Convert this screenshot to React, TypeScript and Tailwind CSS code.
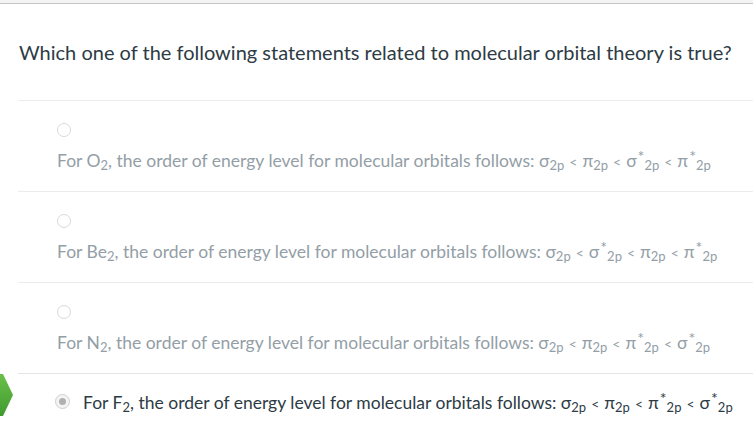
import React from "react";

type Opt = { mol: string; order: [string, string, string, string] };

const options: Opt[] = [
  { mol: "O", order: ["σ", "π", "σ*", "π*"] },
  { mol: "Be", order: ["σ", "σ*", "π", "π*"] },
  { mol: "N", order: ["σ", "π", "π*", "σ*"] },
  { mol: "F", order: ["σ", "π", "π*", "σ*"] },
];

function Orbital({ sym }: { sym: string }) {
  const star = sym.endsWith("*");
  const base = star ? sym.slice(0, -1) : sym;
  return (
    <span>
      {base}
      {star && <sup className="text-[16px] top-[-0.3em] ml-[1px]">*</sup>}
      <sub className="text-[13px]">2p</sub>
    </span>
  );
}

function Statement({ o }: { o: Opt }) {
  return (
    <span>
      For {o.mol}
      <sub className="text-[13px]">2</sub>, the order of energy level for molecular orbitals follows:{" "}
      {o.order.map((s, i) => (
        <React.Fragment key={i}>
          {i > 0 && <span className="text-[14px] px-[5px]">&lt;</span>}
          <Orbital sym={s} />
        </React.Fragment>
      ))}
    </span>
  );
}

export default function App() {
  return (
    <div
      className="w-[753px] h-[442px] bg-white overflow-hidden relative"
      style={{ fontFamily: "Lato, 'Noto Sans', sans-serif" }}
    >
      <div className="h-[4px] bg-[#f3f3f3] border-b border-[#c6c6c6]" />

      <div className="h-[96px] pl-[19px] flex items-center">
        <p className="text-[20px] text-[#2d3b45] pb-[1px]">
          Which one of the following statements related to molecular orbital theory is true?
        </p>
      </div>

      <div className="ml-[18px]">
        {options.slice(0, 3).map((o, i) => (
          <div key={i} className="border-t border-[#ececec] h-[91px] pl-[39px] pt-[22px]">
            <div className="w-[14px] h-[14px] rounded-full border border-[#d9d9d9] bg-white" />
            <div className="mt-[12px] text-[17.5px] leading-[24px] text-[#939ea6]">
              <Statement o={o} />
            </div>
          </div>
        ))}
        <div className="border-t border-[#e4e4e4] h-[70px] pl-[37px] pt-[17px] flex items-start">
          <div className="mt-[3px] w-[15px] h-[15px] rounded-full border border-[#cfcfcf] bg-[#f4f4f4] flex items-center justify-center">
            <div className="w-[7px] h-[7px] rounded-full bg-[#b0b0b0]" />
          </div>
          <div className="ml-[13px] text-[17.5px] leading-[24px] text-[#2d3b45]">
            <Statement o={options[3]} />
          </div>
        </div>
      </div>

      <svg className="absolute left-0 top-[366px]" width="16" height="56" viewBox="0 0 16 56">
        <defs>
          <linearGradient id="grn" x1="0" y1="0" x2="0" y2="1">
            <stop offset="0" stopColor="#6cc04a" />
            <stop offset="1" stopColor="#3f9a2f" />
          </linearGradient>
        </defs>
        <polygon points="0,8 3,8 13,29 3,50 0,50" fill="url(#grn)" />
      </svg>
    </div>
  );
}
